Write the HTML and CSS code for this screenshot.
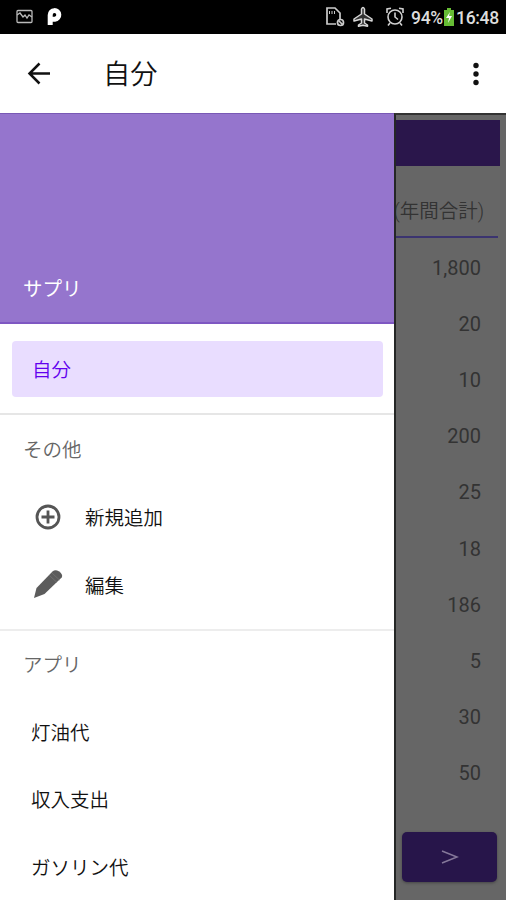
FILE: index.html
```html
<!DOCTYPE html>
<html lang="ja">
<head>
<meta charset="utf-8">
<title>自分</title>
<link rel="stylesheet" href="styles.css">
</head>
<body>
<div class="screen">
  <header class="status">
    <svg class="picture" width="18" height="16" viewBox="0 0 18 16" fill="none" stroke="#bbb" stroke-width="1.3"><rect x="1" y="1.500" width="15" height="12" rx="1"/><path d="M1 6l3-2 3 4 2-2 2 3 2-3 3 2"/></svg>
    <svg class="parking" width="16" height="20" viewBox="0 0 16 20" fill="none" stroke="#fff"><path d="M3.200 18V8a4.300 4.300 0 1 1 4.700 4.200H5.500" stroke-width="5"/></svg>
    <svg class="sim" width="21" height="22" viewBox="0 0 21 22" fill="none" stroke="#ccc" stroke-width="1.700"><path d="M11 18H2V2h8l5 5v6"/><path d="M4.500 5v3M7 5v3M9.500 5v3" stroke-width="1"/><circle cx="15.500" cy="16.500" r="3"/><path d="M13.500 14.500l4 4"/></svg>
    <svg class="plane" width="22" height="22" viewBox="0 0 22 22" fill="#333" stroke="#d8d8d8" stroke-width="1.500" stroke-linejoin="round"><path d="M9.500 8V3q1.500-3 3 0v5l7.500 5v2l-7.500-2v4l3 2v1.300L11 19.300l-4.500 1V19l3-2v-4L2 15v-2z"/></svg>
    <svg class="alarm" width="20" height="22" viewBox="0 0 20 22" fill="none" stroke="#d0d0d0" stroke-width="1.600"><circle cx="10" cy="11" r="7"/><path d="M10 6.500V11l3 2.500M2 7V3l4-.8M18 7V3l-4-.8M5 17l-2 2.500M15 17l2 2.500"/></svg>
    <span class="percent">94%</span>
    <svg class="battery" width="10" height="18" viewBox="0 0 10 18"><path d="M3 0h4v2h3v16H0V2h3z" fill="#67bd35"/><path d="M6 4L2 10h3l-1 5 4-7H5z" fill="#fff"/></svg>
    <span class="clock">16:48</span>
  </header>
  <div class="appbar">
    <svg class="back" width="24" height="24" viewBox="0 0 24 24" fill="none" stroke="#111" stroke-width="2.500"><path d="M23 11.500H3M12.500 1.500L2.500 11.500l10 10"/></svg>
    <h1>自分</h1>
    <svg class="more" width="6" height="24" viewBox="0 0 6 24" fill="#111"><circle cx="3" cy="3.500" r="2.700"/><circle cx="3" cy="12" r="2.700"/><circle cx="3" cy="20.500" r="2.700"/></svg>
  </div>
  <div class="body">
    <nav class="drawer">
      <div class="hero">サプリ</div>
      <div class="current"><a class="selected">自分</a></div>
      <section class="others">
        <h2>その他</h2>
        <a class="item"><svg width="32" height="32" viewBox="0 0 32 32" fill="none" stroke="#555" stroke-width="2.800"><circle cx="16" cy="16" r="11"/><path d="M16 9.500v13M9.500 16h13"/></svg>新規追加</a>
        <a class="item"><svg width="32" height="32" viewBox="0 0 32 32" fill="#5c5c5c"><path d="M2 30L4.500 20 20.500 3.500q2.800-2.200 6.200-.2 4.800 3.200 3 6.200L12.500 26z"/><path d="M17.500 7.500l7.500 7M20 5l7.500 7" stroke="#777" stroke-width=".7"/></svg>編集</a>
      </section>
      <section class="apps">
        <h2>アプリ</h2>
        <a class="item">灯油代</a>
        <a class="item">収入支出</a>
        <a class="item">ガソリン代</a>
      </section>
    </nav>
    <main class="content">
      <div class="banner"></div>
      <div class="heading"><span>(年間合計)</span></div>
      <ul>
        <li>1,800</li><li>20</li><li>10</li><li>200</li><li>25</li><li>18</li><li>186</li><li>5</li><li>30</li><li>50</li>
      </ul>
      <div class="next"><svg width="18" height="18" viewBox="0 0 18 18" fill="none" stroke="#85789a" stroke-width="1.500"><path d="M1 3l15 6L1 15"/></svg></div>
    </main>
  </div>
</div>
</body>
</html>
```

FILE: styles.css
```css
* { box-sizing: border-box; }
body { margin: 0; font-family: Roboto, "Noto Sans CJK JP", sans-serif; font-weight: 350; background: #fff; }
svg { display: block; flex: none; }
h1, h2, ul { margin: 0; padding: 0; font-weight: 350; }
.screen { width: 506px; height: 900px; overflow: hidden; display: flex; flex-direction: column; }

.status { height: 34px; flex: none; background: #000; display: flex; align-items: center; color: #ddd; font-size: 17.5px; font-weight: 500; letter-spacing: -.3px; padding-left: 16px; white-space: nowrap; }
.parking { margin-left: 13px; }
.sim { margin-left: 262px; }
.plane { margin-left: 6px; }
.alarm { margin-left: 11px; }
.percent { margin-left: 6px; width: 33px; }
.clock { margin-left: 2px; }
.percent, .clock { padding-top: 2px; }

.appbar { height: 79px; flex: none; display: flex; align-items: center; padding: 0 27px; }
.appbar h1 { margin-left: 52px; padding-top: 3px; font-size: 27.3px; line-height: 40px; color: #111; }
.more { margin-left: auto; }

.body { flex: 1; min-height: 0; display: grid; grid-template-columns: 394px 112px; }
.drawer { background: #fff; overflow: hidden; font-size: 19.5px; color: #111; }
.hero { height: 211px; background: #9575cd; border-top: 1px solid #7959b5; border-bottom: 2px solid #7e57c2; color: #fff; font-weight: 400; padding: 161px 0 0 23px; line-height: 30px; }
.current { height: 91px; padding: 17px 11px 0 12px; border-bottom: 2px solid #e6e6e6; }
.selected { display: flex; align-items: center; height: 56px; padding: 0 0 2px 20px; background: #e9ddff; color: #6200ee; border-radius: 4px; }
.others { height: 216px; border-bottom: 2px solid #ededed; }
.drawer h2 { height: 68px; line-height: 68px; padding: 1px 0 0 23px; font-size: 19.5px; color: #666; }
.others h2 { padding-top: 2px; }
.item { display: flex; align-items: center; height: 67.5px; padding: 0 0 2px 32px; }
.others .item { padding-bottom: 0; }
.item svg { margin-right: 21px; }
.apps .item { padding-bottom: 3px; padding-left: 31px; }

.content { background: #666; border-left: 2px solid #252726; border-top: 2px solid #333; overflow: hidden; display: flex; flex-direction: column; color: #333; font-size: 20px; }
.banner { height: 46px; flex: none; margin: 5px 6px 0 0; background: #2a164b; }
.heading { height: 72px; flex: none; margin-right: 8px; border-bottom: 2px solid #3b3470; display: flex; justify-content: flex-end; align-items: center; padding: 16px 14px 0 0; white-space: nowrap; font-size: 19.5px; }
.content ul { list-style: none; }
.content li { height: 56.2px; display: flex; align-items: center; justify-content: flex-end; padding: 3px 25px 0 0; font-weight: 400; }
.next { width: 95px; height: 50px; flex: none; margin: 32px 0 0 6px; border-radius: 5px; background: #27154a; display: flex; align-items: center; justify-content: center; box-shadow: 0 1px 3px #444; }
```
